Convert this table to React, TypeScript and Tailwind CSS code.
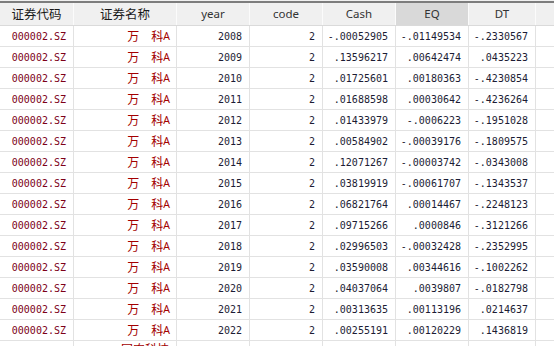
import React from 'react'

type Row = {
  id: string
  name: string
  year: string
  code: string
  cash: string
  eq: string
  dt: string
}

const ROWS: Row[] = [
  { id: '000002.SZ', name: '万　科A', year: '2008', code: '2', cash: '-.00052905', eq: '-.01149534', dt: '-.2330567' },
  { id: '000002.SZ', name: '万　科A', year: '2009', code: '2', cash: '.13596217', eq: '.00642474', dt: '.0435223' },
  { id: '000002.SZ', name: '万　科A', year: '2010', code: '2', cash: '.01725601', eq: '.00180363', dt: '-.4230854' },
  { id: '000002.SZ', name: '万　科A', year: '2011', code: '2', cash: '.01688598', eq: '.00030642', dt: '-.4236264' },
  { id: '000002.SZ', name: '万　科A', year: '2012', code: '2', cash: '.01433979', eq: '-.0006223', dt: '-.1951028' },
  { id: '000002.SZ', name: '万　科A', year: '2013', code: '2', cash: '.00584902', eq: '-.00039176', dt: '-.1809575' },
  { id: '000002.SZ', name: '万　科A', year: '2014', code: '2', cash: '.12071267', eq: '-.00003742', dt: '-.0343008' },
  { id: '000002.SZ', name: '万　科A', year: '2015', code: '2', cash: '.03819919', eq: '-.00061707', dt: '-.1343537' },
  { id: '000002.SZ', name: '万　科A', year: '2016', code: '2', cash: '.06821764', eq: '.00014467', dt: '-.2248123' },
  { id: '000002.SZ', name: '万　科A', year: '2017', code: '2', cash: '.09715266', eq: '.0000846', dt: '-.3121266' },
  { id: '000002.SZ', name: '万　科A', year: '2018', code: '2', cash: '.02996503', eq: '-.00032428', dt: '-.2352995' },
  { id: '000002.SZ', name: '万　科A', year: '2019', code: '2', cash: '.03590008', eq: '.00344616', dt: '-.1002262' },
  { id: '000002.SZ', name: '万　科A', year: '2020', code: '2', cash: '.04037064', eq: '.0039807', dt: '-.0182798' },
  { id: '000002.SZ', name: '万　科A', year: '2021', code: '2', cash: '.00313635', eq: '.00113196', dt: '.0214637' },
  { id: '000002.SZ', name: '万　科A', year: '2022', code: '2', cash: '.00255191', eq: '.00120229', dt: '.1436819' },
]

const mono = "font-['DejaVu_Sans_Mono','Liberation_Mono',monospace] text-[10px]"
const cjk = "font-['Noto_Sans_CJK_SC',sans-serif]"
const cell = 'shrink-0 flex items-center justify-end border-r border-[#e2e2e2]'

function HeaderCell({ label, w, active, cn }: { label: string; w: string; active?: boolean; cn?: boolean }) {
  return (
    <div
      className={`${w} shrink-0 h-full flex items-center justify-center border-r border-[#fbfbfb] ${
        active ? 'bg-[#d9d9d9]' : ''
      } ${cn ? `${cjk} text-[12.5px] text-[#1a1a1a]` : "font-['Noto_Sans',sans-serif] text-[11.5px] text-[#333]"}`}
    >
      {label}
    </div>
  )
}

export default function App() {
  return (
    <div className="w-[554px] h-[346px] overflow-hidden bg-white select-none">
      <div className="h-px bg-[#f0f0f0]" />
      <div className="h-[2px] bg-[#7d7d7d]" />
      {/* header */}
      <div className="flex h-[23px] bg-[#f0f0f0] border-b border-[#dadada]">
        <HeaderCell label="证券代码" w="w-[74px]" cn />
        <HeaderCell label="证券名称" w="w-[103px]" cn />
        <HeaderCell label="year" w="w-[73px]" />
        <HeaderCell label="code" w="w-[73px]" />
        <HeaderCell label="Cash" w="w-[73px]" />
        <HeaderCell label="EQ" w="w-[73px]" active />
        <HeaderCell label="DT" w="w-[67px]" />
        <div className="flex-1" />
      </div>

      {ROWS.map((r, i) => (
        <div key={i} className="flex h-[21px] border-b border-[#e2e2e2]">
          <div className={`w-[74px] pr-[7px] ${cell} ${mono} text-[#7d0018]`}>{r.id}</div>
          <div className={`w-[103px] pr-[6px] ${cell} text-[#a30000]`}>
            <span className={`${cjk} text-[12px] leading-none`}>{r.name.replace(/A$/, '')}</span>
            <span className="font-['Noto_Sans',sans-serif] text-[10.5px] leading-none">A</span>
          </div>
          {[r.year, r.code, r.cash, r.eq].map((v, j) => (
            <div key={j} className={`w-[73px] pr-[7px] ${cell} ${mono} text-[#1c1c34]`}>
              {v}
            </div>
          ))}
          <div className={`w-[67px] pr-[7px] ${cell} ${mono} text-[#1c1c34]`}>{r.dt}</div>
          <div className="flex-1" />
        </div>
      ))}

      {/* next row, only its top edge is in view */}
      <div className="flex h-[21px]">
        <div className={`w-[74px] ${cell}`} />
        <div className={`w-[103px] pr-[7px] ${cell} items-start pt-[2px] text-[#a30000]`}>
          <span className={`${cjk} text-[12px] leading-none`}>国农科技</span>
        </div>
        <div className={`w-[73px] ${cell}`} />
        <div className={`w-[73px] ${cell}`} />
        <div className={`w-[73px] ${cell}`} />
        <div className={`w-[73px] ${cell}`} />
        <div className={`w-[67px] ${cell}`} />
      </div>
    </div>
  )
}
